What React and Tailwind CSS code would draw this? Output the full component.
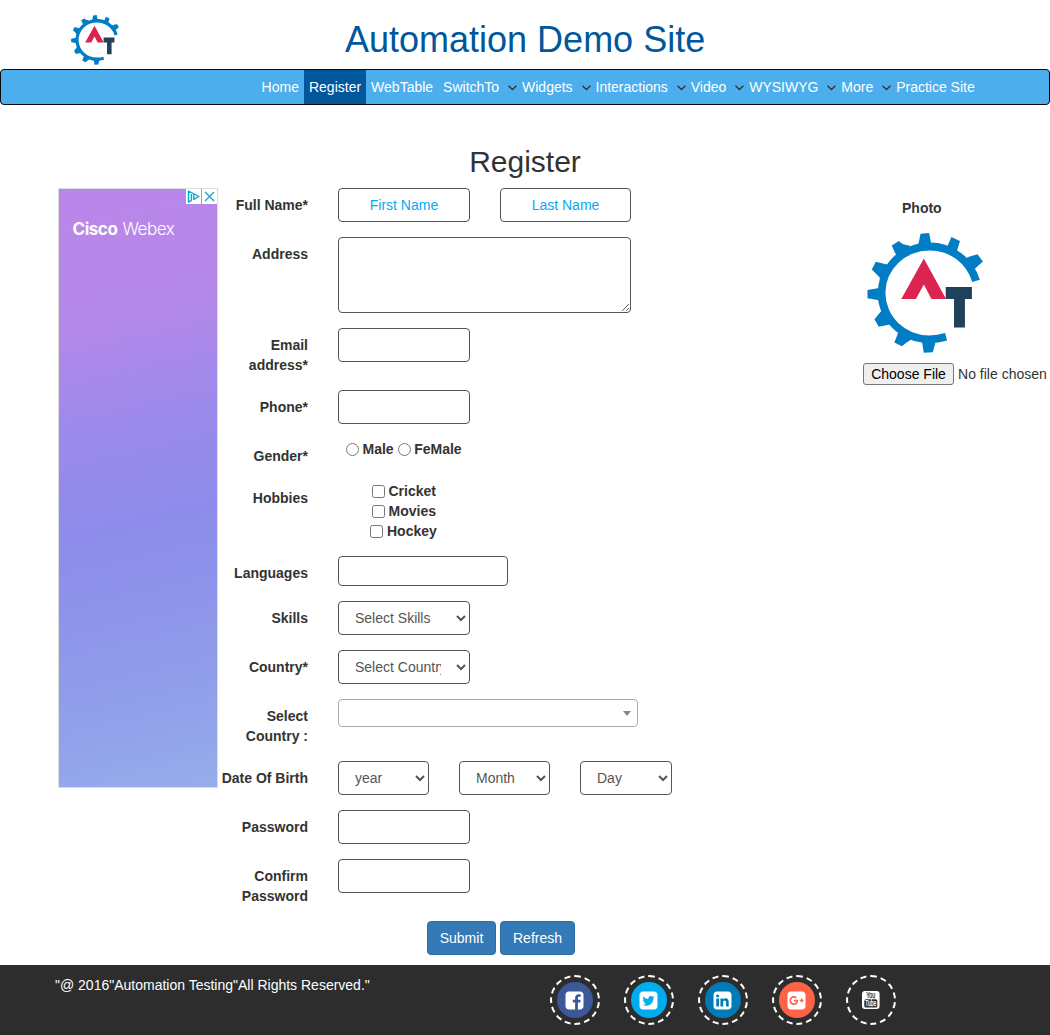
import React from "react";

const control =
  "h-[34px] rounded-[4px] border border-[#555] bg-white px-3 py-1.5 text-sm leading-5 text-[#555]";

function GearLogo({ className }) {
  return (
    <svg viewBox="50 128 349 362" className={className}>
      <g fill="#007dc5">
        <path d="M390 269A157 157 0 0 0 237 157A155 154 0 0 0 82 311A155 150 0 0 0 237 460Q266 460 291 452L285 430Q262 437 237 437A132 129 0 0 1 105 308A132 127 0 0 1 237 181A132 130 0 0 1 367 276Z" />
        <path d="M202 172L205 160L211 130L237 128L243 160L247 172Z" />
        <path d="M288 178L304 140L330 152L317 194Z" />
        <path d="M336 218L348 204Q354 200 383 192L399 214L375 236L364 246Z" />
        <path d="M138 212L139 198L124 166L146 152Q156 164 178 166L178 182Z" />
        <path d="M88 272L88 262L64 238L76 215L110 223L122 230Z" />
        <path d="M94 292L82 295L51 300V325L86 331L96 336Z" />
        <path d="M94 352L92 364L72 388L85 411L118 404L128 400Z" />
        <path d="M144 418L144 428L132 458L155 470Q164 460 182 450L186 440Z" />
        <path d="M210 448L216 459L221 489L248 488L256 458L262 446Z" />
      </g>
      <path fill="#dc2450" d="M221 205L288 327H244L221 283L197 327H153Z" />
      <path fill="#20415a" d="M287 291H366V327H345V413H312V327H287Z" />
    </svg>
  );
}

function NavItem({ label, active, menu }) {
  return (
    <li className="flex h-[34px] items-center">
      <a
        href="#"
        className={
          active
            ? "flex h-full items-center bg-[#00579b] px-[5px]"
            : "flex h-full items-center px-[5px]"
        }
      >
        {label}
      </a>
      {menu && (
        <svg viewBox="0 0 9 6" className="ml-1 mt-px h-1.5 w-[8.9px]" fill="none">
          <path d="M0.5 0.7L4.5 4.6L8.5 0.7" stroke="#333" strokeWidth="1.4" />
        </svg>
      )}
    </li>
  );
}

function Row({ label, children }) {
  return (
    <div className="mb-[15px] flex items-start">
      <label className="w-[90px] shrink-0 whitespace-pre-line pt-[7px] text-right font-bold">
        {label}
      </label>
      <div className="ml-[30px] flex">{children}</div>
    </div>
  );
}

function Hobby({ label, shift }) {
  return (
    <label className={shift ? "-ml-0.5 flex h-5 items-center" : "flex h-5 items-center"}>
      <input
        type="checkbox"
        className={shift ? "mr-1 h-[13px] w-[13px]" : "mr-[3.5px] h-[13px] w-[13px]"}
      />
      {label}
    </label>
  );
}

const frame =
  "M1664 416v960q0 119-84.5 203.5t-203.5 84.5h-960q-119 0-203.5-84.5t-84.5-203.5v-960q0-119 84.5-203.5t203.5-84.5h960q119 0 203.5 84.5t84.5 203.5z";

const socials = [
  {
    name: "Facebook",
    bg: "bg-[#3b5998]",
    path: "M1376 128q119 0 203.5 84.5t84.5 203.5v960q0 119-84.5 203.5t-203.5 84.5h-188v-595h199l30-232h-229v-148q0-56 23.5-84t91.5-28l122-1v-207q-63-9-178-9-136 0-217.5 80t-81.5 226v171h-200v232h200v595h-532q-119 0-203.5-84.5t-84.5-203.5v-960q0-119 84.5-203.5t203.5-84.5h960z",
  },
  {
    name: "Twitter",
    bg: "bg-[#00aced]",
    path:
      frame +
      "M1408 610q-56 25-121 34 68-40 93-117-65 38-134 51-61-66-153-66-87 0-148.5 61.5t-61.5 148.5q0 29 5 48-129-7-242-65t-192-155q-29 50-29 106 0 114 91 175-47-1-100-26v2q0 75 50 133.5t123 72.5q-29 8-51 8-13 0-39-4 21 63 74.5 104t121.5 42q-116 90-261 90-26 0-50-3 148 94 322 94 112 0 210-35.5t168-95 120.5-137 75-162 24.5-168.5q0-18-1-27 63-45 105-109z",
  },
  {
    name: "LinkedIn",
    bg: "bg-[#007bb6]",
    path:
      frame +
      "M365 1414h231v-694h-231v694zM611 506q-1-52-36-86t-93-34-94.5 34-36.5 86q0 51 35.5 85.5t92.5 34.5h1q59 0 95-34.5t36-85.5zM1196 1414h231v-398q0-154-73-233t-193-79q-136 0-209 117h2v-101h-231q3 66 0 694h231v-388q0-38 7-56 15-35 45-59.5t74-24.5q116 0 116 157v371z",
  },
  {
    name: "Google Plus",
    bg: "bg-[#ff6347]",
    path:
      frame +
      "M1045 905q0-26-6-64h-362v132h217q-3 24-16.5 50t-37.5 53-66.5 44.5-96.5 17.5q-99 0-169-71t-70-171 70-171 169-71q92 0 153 59l104-101q-108-100-257-100-160 0-272 112.5t-112 271.5 112 271.5 272 112.5q165 0 266.5-105t101.5-270zM1390 951h109v-110h-109v-110h-110v110h-110v110h110v110h110v-110z",
  },
  { name: "YouTube", bg: "bg-transparent" },
];

function Social({ item }) {
  return (
    <a
      href="#"
      aria-label={item.name}
      className="flex h-[50px] w-[50px] items-center justify-center rounded-full border-2 border-dashed border-white"
    >
      <span className={"flex h-9 w-9 items-center justify-center rounded-full " + item.bg}>
        {item.path ? (
          <svg viewBox="0 0 1792 1792" className="mr-px h-[21px] w-[21px]" fill="#fff" fillRule="evenodd">
            <path d={item.path} />
          </svg>
        ) : (
          <svg viewBox="0 0 18 18" className="mr-px h-[18px] w-[18px] overflow-visible">
            <rect x="0" y="0" width="17.6" height="18" rx="3" fill="#fff" />
            <text
              x="8.8" y="7.4" textAnchor="middle" textLength="9" lengthAdjust="spacingAndGlyphs"
              fontSize="8.5" fontFamily="Liberation Sans, sans-serif" fill="#2d2d2d" stroke="#2d2d2d" strokeWidth="0.25"
            >You</text>
            <rect x="2.3" y="8.2" width="13" height="8.3" rx="1.6" fill="#2d2d2d" />
            <text
              x="8.8" y="15.4" textAnchor="middle" textLength="11" lengthAdjust="spacingAndGlyphs"
              fontSize="8.5" fontFamily="Liberation Sans, sans-serif" fill="#fff" stroke="#fff" strokeWidth="0.25"
            >Tube</text>
          </svg>
        )}
      </span>
    </a>
  );
}

export default function App() {
  return (
    <div className="flex h-[1035px] w-[1050px] flex-col overflow-hidden bg-white font-['Liberation_Sans',Arial,sans-serif] text-sm leading-5 text-[#333]">
      <header className="grid h-[69px] grid-cols-[345px_360px_345px]">
        <GearLogo className="ml-[70.5px] mt-[15px] h-[50px] w-12" />
        <h1 className="mt-5 whitespace-nowrap text-center text-[36px] leading-[39.6px] text-[#00579b]">
          Automation Demo Site
        </h1>
      </header>

      <nav className="h-9 rounded-[4px] border border-[#080808] bg-[#4caeec]">
        <ul className="ml-[255.6px] flex whitespace-nowrap text-white">
          <NavItem label="Home" />
          <NavItem label="Register" active />
          <NavItem label="WebTable" />
          <NavItem label="SwitchTo" menu />
          <NavItem label="Widgets" menu />
          <NavItem label="Interactions" menu />
          <NavItem label="Video" menu />
          <NavItem label="WYSIWYG" menu />
          <NavItem label="More" menu />
          <NavItem label="Practice Site" />
        </ul>
      </nav>

      <h2 className="mt-10 h-[43px] text-center text-[30px] leading-[33px]">Register</h2>

      <main className="flex h-[777px] items-start pl-[58px]">
        <aside className="h-[600px] w-40 shrink-0 border border-[#ddd] bg-[linear-gradient(167deg,#bb85e9_0%,#b488ea_22%,#9b8aea_40%,#8d8ceA_56%,#8f98ea_74%,#91a2ea_88%,#98adec_100%)]">
          <div className="flex h-[15px] justify-end gap-px">
            <span className="flex w-[15px] items-center justify-center bg-white">
              <svg viewBox="0 0 13 13" className="h-[13px] w-[13px]" fill="none" stroke="#00aecd" strokeWidth="1.4" strokeLinejoin="round">
                <path d="M4.6 10.5L1.5 12V1L12 6.5L6.8 9.3V4.2M4.4 4V10.5" />
              </svg>
            </span>
            <span className="flex w-[15px] items-center justify-center bg-white">
              <svg viewBox="0 0 13 13" className="h-[13px] w-[13px]" fill="none" stroke="#00aecd" strokeWidth="1.3">
                <path d="M2 2L11 11M11 2L2 11" />
              </svg>
            </span>
          </div>
          <p className="ml-[13.5px] mt-[15px] flex gap-[5px] whitespace-nowrap font-['Inter',sans-serif] text-[17px] leading-5 tracking-[-0.45px] text-white">
            <b>Cisco</b>
            <span className="font-light">Webex</span>
          </p>
        </aside>

        <form className="w-[645px] shrink-0">
          <Row label="Full Name*">
            <input placeholder="First Name" className={control + " w-[132px] text-center placeholder:text-[#03a9f4]"} />
            <input placeholder="Last Name" className={control + " ml-[30px] w-[131px] text-center placeholder:text-[#03a9f4]"} />
          </Row>
          <Row label="Address">
            <textarea className="block h-[76px] w-[293px] resize rounded-[4px] border border-[#555] px-3 py-1.5" />
          </Row>
          <Row label={"Email\naddress*"}>
            <input className={control + " w-[132px]"} />
          </Row>
          <Row label="Phone*">
            <input className={control + " w-[132px]"} />
          </Row>
          <Row label="Gender*">
            <div className="flex h-5 items-center gap-1 pl-2 font-bold">
              <label className="flex items-center">
                <input type="radio" className="mr-[3.5px] h-[13px] w-[13px]" />Male
              </label>
              <label className="flex items-center">
                <input type="radio" className="mr-[3.5px] h-[13px] w-[13px]" />FeMale
              </label>
            </div>
          </Row>
          <Row label="Hobbies">
            <div className="ml-[34px] font-bold">
              <Hobby label="Cricket" />
              <Hobby label="Movies" />
              <Hobby label="Hockey" shift />
            </div>
          </Row>
          <Row label="Languages">
            <div className="h-[30px] w-[170px] rounded-[4px] border border-[#555]" />
          </Row>
          <Row label="Skills">
            <select className={control + " w-[132px]"}><option>Select Skills</option></select>
          </Row>
          <Row label="Country*">
            <select className={control + " w-[132px]"}><option>Select Country</option></select>
          </Row>
          <Row label={"Select\nCountry :"}>
            <div className="flex h-7 w-[300px] items-center justify-end rounded-[4px] border border-[#aaa] pr-1.5">
              <span className="h-0 w-0 border-x-4 border-t-[5px] border-x-transparent border-t-[#888]" />
            </div>
          </Row>
          <Row label="Date Of Birth">
            <select className={control + " w-[91px]"}><option>year</option></select>
            <select className={control + " ml-[30px] w-[91px]"}><option>Month</option></select>
            <select className={control + " ml-[30px] w-[92px]"}><option>Day</option></select>
          </Row>
          <Row label="Password">
            <input type="password" className={control + " w-[132px]"} />
          </Row>
          <Row label={"Confirm\nPassword"}>
            <input type="password" className={control + " w-[132px]"} />
          </Row>
          <div className="ml-[209px] flex gap-1 text-white">
            <button type="button" className="h-[34px] w-[69px] rounded-[4px] border border-[#2e6da4] bg-[#337ab7]">Submit</button>
            <button type="button" className="h-[34px] w-[75px] rounded-[4px] border border-[#2e6da4] bg-[#337ab7]">Refresh</button>
          </div>
        </form>

        <section className="w-[187px] shrink-0 pt-2.5">
          <h3 className="ml-[39px] font-bold">Photo</h3>
          <GearLogo className="ml-[3.5px] mt-[15px] h-[120px] w-[116px]" />
          <input
            type="file"
            className="mt-2.5 block h-[22px] w-[187px] leading-5 file:mr-1 file:h-[22px] file:rounded-[3px] file:border file:border-[#767676] file:bg-[#efefef] file:px-[7.2px] file:text-black"
          />
        </section>
      </main>

      <footer className="flex h-[70px] items-start bg-[#2d2d2d] pl-[55px] pt-2.5 text-white">
        <p className="w-[495px]">"@ 2016"Automation Testing"All Rights Reserved."</p>
        <div className="flex gap-6">
          {socials.map((item) => (
            <Social key={item.name} item={item} />
          ))}
        </div>
      </footer>
    </div>
  );
}
